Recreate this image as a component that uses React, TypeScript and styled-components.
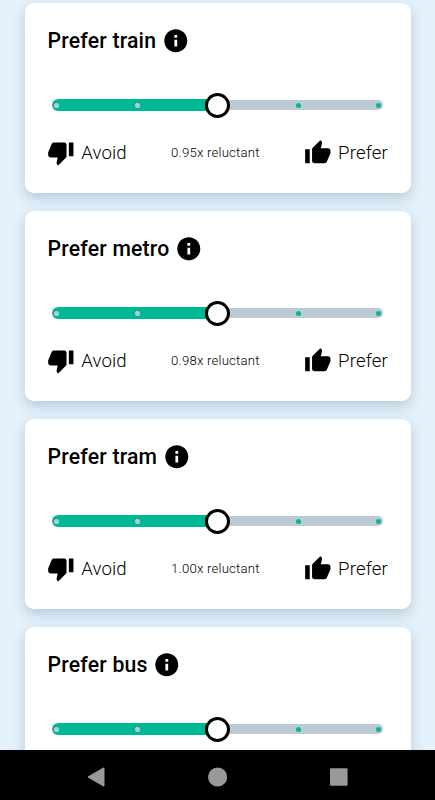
import React from 'react';
import styled, { createGlobalStyle } from 'styled-components';

const GlobalStyle = createGlobalStyle`
  * { box-sizing: border-box; }
  body { margin: 0; background: #e5f2fc; font-family: Roboto, sans-serif; color: #000; }
`;

const Screen = styled.div`
  height: 800px;
  display: flex;
  flex-direction: column;
  overflow: hidden;
  background: #e5f2fc;
`;

const CardList = styled.main`
  flex: 1;
  min-height: 0;
  overflow: hidden;
  display: flex;
  flex-direction: column;
  gap: 18px;
  padding: 3px 24.5px 0;
`;

const Card = styled.section`
  flex: 0 0 190px;
  border-radius: 9px;
  background: #fff;
  box-shadow: 0 5px 13px rgba(70, 105, 135, 0.3);
  padding: 23px 23px 0;
`;

const Heading = styled.div`
  display: flex;
  align-items: center;
  gap: 5.8px;
  height: 29px;
`;

const Title = styled.h2`
  margin: 0;
  font-size: 21.2px;
  font-weight: 500;
  letter-spacing: 0.2px;
  line-height: 29px;
  white-space: nowrap;
`;

const Icon = styled.svg`
  width: 27.6px;
  height: 27.6px;
  flex: none;
  fill: #000;
`;

const Slider = styled.div`
  position: relative;
  display: flex;
  align-items: center;
  height: 26px;
  margin: 37px 4.5px 0;
`;

const Track = styled.div<{ $active?: boolean }>`
  flex: 1;
  height: ${(p) => (p.$active ? '11.6px' : '9.2px')};
  background: ${(p) => (p.$active ? '#00b894' : '#bccad3')};
  border-radius: ${(p) => (p.$active ? '6px 0 0 6px' : '0 5px 5px 0')};
`;

const Ticks = styled.div`
  position: absolute;
  inset: 0 2px;
  display: flex;
  align-items: center;
  justify-content: space-between;
`;

const Tick = styled.i<{ $active?: boolean }>`
  width: 5px;
  height: 5px;
  border-radius: 50%;
  background: ${(p) => (p.$active ? '#bccad3' : '#00b894')};
`;

const Thumb = styled.i`
  width: 25px;
  height: 25px;
  margin: 0 -10px;
  border: 3.5px solid #000;
  border-radius: 50%;
  background: #fff;
`;

const Labels = styled.div`
  display: flex;
  align-items: center;
  justify-content: space-between;
  height: 28px;
  margin-top: 21px;
`;

const Choice = styled.div`
  display: flex;
  align-items: center;
  gap: 6.6px;
  margin: 0 -0.5px 0 -0.5px;
  font-size: 18.6px;
  font-weight: 300;
  letter-spacing: 0.15px;
  line-height: 28px;

  svg {
    margin-top: -1px;
  }
`;

const Value = styled.span`
  font-size: 13.2px;
  font-weight: 300;
  letter-spacing: 0.2px;
  line-height: 28px;
`;

const NavBar = styled.nav`
  flex: 0 0 50px;
  display: flex;
  align-items: center;
  justify-content: center;
  gap: 93px;
  padding-top: 4px;
  background: #000;
`;

const NavIcon = styled.svg`
  width: 28px;
  height: 28px;
  fill: #999;
  stroke: #999;
  stroke-width: 2;
  stroke-linejoin: round;
`;

const preferences = [
  { title: 'Prefer train', value: '0.95x reluctant' },
  { title: 'Prefer metro', value: '0.98x reluctant' },
  { title: 'Prefer tram', value: '1.00x reluctant' },
  { title: 'Prefer bus', value: '' },
];

function PreferenceCard({ title, value }: { title: string; value: string }) {
  return (
    <Card>
      <Heading>
        <Title>{title}</Title>
        <Icon viewBox="0 0 24 24">
          <path d="M12 2C6.48 2 2 6.48 2 12s4.48 10 10 10 10-4.48 10-10S17.52 2 12 2zm1.2 15h-2.4v-6h2.4v6zm0-7.6h-2.4V7h2.4v2.4z" />
        </Icon>
      </Heading>
      <Slider>
        <Track $active />
        <Ticks>
          <Tick $active />
          <Tick $active />
          <Thumb />
          <Tick />
          <Tick />
        </Ticks>
        <Track />
      </Slider>
      {value && (
        <Labels>
          <Choice>
            <Icon viewBox="0 0 24 24">
              <path d="M15 3H6c-.83 0-1.54.5-1.84 1.22l-3.02 7.05c-.09.23-.14.47-.14.73v2c0 1.1.9 2 2 2h6.31l-.95 4.57-.03.32c0 .41.17.79.44 1.06L9.83 23l6.59-6.59c.36-.36.58-.86.58-1.41V5c0-1.1-.9-2-2-2zm4 0v12h4V3h-4z" />
            </Icon>
            Avoid
          </Choice>
          <Value>{value}</Value>
          <Choice>
            <Icon viewBox="0 0 24 24">
              <path d="M1 21h4V9H1v12zm22-11c0-1.1-.9-2-2-2h-6.31l.95-4.57.03-.32c0-.41-.17-.79-.44-1.06L14.17 1 7.59 7.59C7.22 7.95 7 8.45 7 9v10c0 1.1.9 2 2 2h9c.83 0 1.54-.5 1.84-1.22l3.02-7.05c.09-.23.14-.47.14-.73v-2z" />
            </Icon>
            Prefer
          </Choice>
        </Labels>
      )}
    </Card>
  );
}

export default function App() {
  return (
    <>
      <GlobalStyle />
      <Screen>
        <CardList>
          {preferences.map((p) => (
            <PreferenceCard key={p.title} {...p} />
          ))}
        </CardList>
        <NavBar>
          <NavIcon viewBox="0 0 28 28">
            <path d="M5.8 14 L20.5 5.6 V22.4 Z" />
          </NavIcon>
          <NavIcon viewBox="0 0 28 28">
            <circle cx="13.6" cy="14" r="8.6" />
          </NavIcon>
          <NavIcon viewBox="0 0 28 28">
            <rect x="6" y="6.3" width="15.6" height="15.4" />
          </NavIcon>
        </NavBar>
      </Screen>
    </>
  );
}
